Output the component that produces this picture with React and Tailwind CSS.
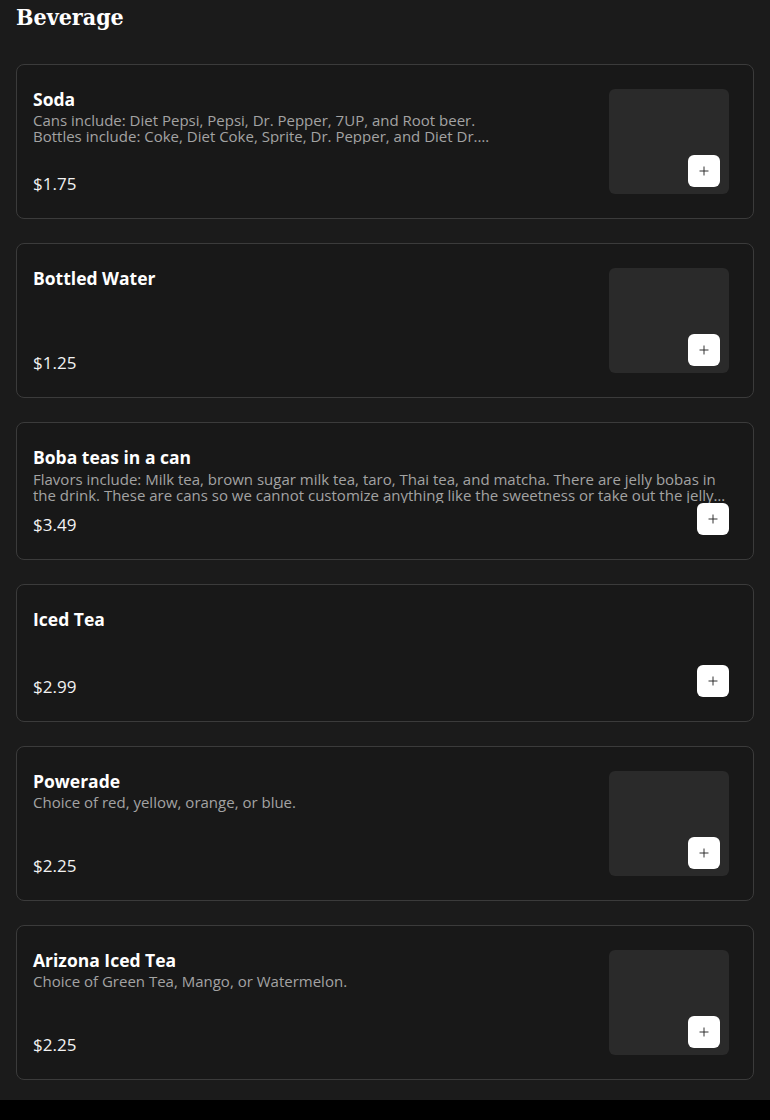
import React from 'react';
import { Plus } from 'lucide-react';

const items = [
    {
        name: 'Soda',
        desc: 'Cans include: Diet Pepsi, Pepsi, Dr. Pepper, 7UP, and Root beer.\nBottles include: Coke, Diet Coke, Sprite, Dr. Pepper, and Diet Dr. Pepper.',
        price: '$1.75',
        image: true,
    },
    { name: 'Bottled Water', desc: '', price: '$1.25', image: true },
    {
        name: 'Boba teas in a can',
        desc: 'Flavors include: Milk tea, brown sugar milk tea, taro, Thai tea, and matcha. There are jelly bobas in the drink. These are cans so we cannot customize anything like the sweetness or take out the jelly bobas.',
        price: '$3.49',
        image: false,
    },
    { name: 'Iced Tea', desc: '', price: '$2.99', image: false },
    { name: 'Powerade', desc: 'Choice of red, yellow, orange, or blue.', price: '$2.25', image: true },
    { name: 'Arizona Iced Tea', desc: 'Choice of Green Tea, Mango, or Watermelon.', price: '$2.25', image: true },
];

const font = { fontFamily: '"Open Sans", "Liberation Sans", sans-serif' };

const AddButton = ({ className = '' }) => (
    <button className={`w-8 h-8 rounded-md bg-white flex items-center justify-center text-[#222] ${className}`}>
        <Plus className="w-3.5 h-3.5" strokeWidth={1.6} />
    </button>
);

const ItemCard = ({ item }) => {
    if (item.image) {
        return (
            <div className="flex rounded-lg border border-[#3b3b3b] bg-[#181818] pl-4 pr-6 py-6">
                <div className="flex-1 min-w-0 flex flex-col pr-24">
                    <h3 className="text-[17.5px] leading-5 font-bold text-white">{item.name}</h3>
                    <p className="mt-[3px] min-h-8 text-[15px] leading-4 text-[#a3a3a3] whitespace-pre-line line-clamp-2">{item.desc}</p>
                    <div className="mt-auto text-[17px] leading-5 text-[#f2f2f2]">{item.price}</div>
                </div>
                <div className="relative w-[120px] h-[105px] shrink-0 rounded-md bg-[#2a2a2a]">
                    <AddButton className="absolute right-[9px] bottom-[7px]" />
                </div>
            </div>
        );
    }
    return (
        <div className="flex flex-col rounded-lg border border-[#3b3b3b] bg-[#181818] pl-4 pr-6 py-6">
            <h3 className="text-[17.5px] leading-5 font-bold text-white">{item.name}</h3>
            <p className="mt-[4px] min-h-8 text-[15px] leading-4 text-[#a3a3a3] line-clamp-2">{item.desc}</p>
            <div className="flex items-end justify-between">
                <span className="text-[17px] leading-5 text-[#f2f2f2]">{item.price}</span>
                <AddButton />
            </div>
        </div>
    );
};

export default function App() {
    return (
        <div className="min-h-screen bg-black" style={font}>
            <section className="bg-[#1b1b1b] px-4 pb-5">
                <h2
                    className="h-10 mb-6 text-[23px] leading-[34px] font-bold text-white"
                    style={{ fontFamily: '"DejaVu Serif Condensed", "DejaVu Serif", "Liberation Serif", serif' }}
                >
                    Beverage
                </h2>
                <div className="flex flex-col gap-6">
                    {items.map(item => (
                        <ItemCard key={item.name} item={item} />
                    ))}
                </div>
            </section>
        </div>
    );
}
